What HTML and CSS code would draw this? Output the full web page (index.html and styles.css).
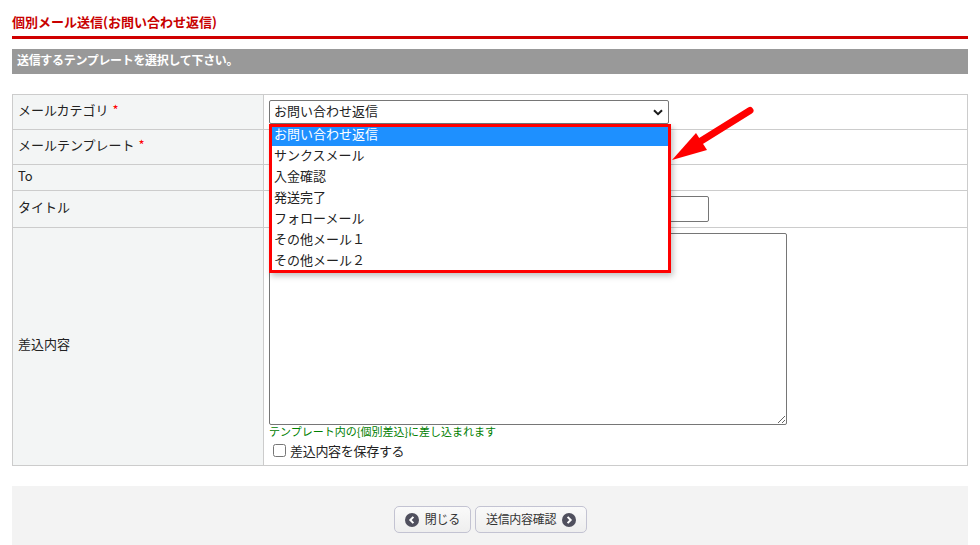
FILE: index.html
```html
<!DOCTYPE html>
<html lang="ja">
<head>
<meta charset="utf-8">
<title>個別メール送信</title>
<link rel="stylesheet" href="styles.css">
</head>
<body>
<h1 class="page-title">個別メール送信(お問い合わせ返信)</h1>
<h2 class="section-bar">送信するテンプレートを選択して下さい。</h2>
<table class="form-table">
  <tr class="row-a">
    <th>メールカテゴリ <span class="req">*</span></th>
    <td>
      <div class="select-wrap">
        <div class="fake-select">
          <span>お問い合わせ返信</span>
          <svg class="chev" width="10" height="7" viewBox="0 0 10 7"><path d="M1 1.200 5 5.200 9 1.200" fill="none" stroke="#1a1a1a" stroke-width="2"/></svg>
        </div>
        <ul class="popup">
          <li class="active">お問い合わせ返信</li>
          <li>サンクスメール</li>
          <li>入金確認</li>
          <li>発送完了</li>
          <li>フォローメール</li>
          <li>その他メール１</li>
          <li>その他メール２</li>
        </ul>
      </div>
    </td>
  </tr>
  <tr class="row-a">
    <th>メールテンプレート <span class="req">*</span></th>
    <td></td>
  </tr>
  <tr class="row-b">
    <th>To</th>
    <td></td>
  </tr>
  <tr class="row-c">
    <th>タイトル</th>
    <td><input class="title-input" type="text"></td>
  </tr>
  <tr class="row-d">
    <th class="mid">差込内容</th>
    <td class="body-cell">
      <textarea class="body-input"></textarea>
      <p class="hint">テンプレート内の{個別差込}に差し込まれます</p>
      <label class="save"><input type="checkbox"><span>差込内容を保存する</span></label>
    </td>
  </tr>
</table>
<div class="footer">
  <button class="btn" type="button">
    <svg width="14" height="14" viewBox="0 0 14 14"><circle cx="7" cy="7" r="7" fill="#50505e"/><path d="M8.400 3.900 5.300 7l3.100 3.100" fill="none" stroke="#fff" stroke-width="2"/></svg>
    <span>閉じる</span>
  </button>
  <button class="btn" type="button">
    <span>送信内容確認</span>
    <svg width="14" height="14" viewBox="0 0 14 14"><circle cx="7" cy="7" r="7" fill="#50505e"/><path d="M5.600 3.900 8.700 7l-3.100 3.100" fill="none" stroke="#fff" stroke-width="2"/></svg>
  </button>
</div>
<svg class="arrow" width="90" height="60" viewBox="0 0 90 60">
  <path d="M1 54 25 27 36 44Z" fill="#f00"/>
  <path d="M30 35 79 4.500" stroke="#f00" stroke-width="7" stroke-linecap="round" fill="none"/>
</svg>
</body>
</html>
```
FILE: styles.css
```css
* { box-sizing: border-box; }
html, body { margin: 0; padding: 0; }
body {
  position: relative;
  width: 980px;
  height: 545px;
  overflow: hidden;
  padding: 0 12px;
  background: #fff;
  color: #222;
  font-family: "Noto Sans CJK JP", "Liberation Sans", sans-serif;
  font-size: 13px;
}
.page-title {
  margin: 0;
  height: 39px;
  padding-top: 12px;
  border-bottom: 3px solid #d00000;
  color: #c80000;
  font-size: 13px;
  line-height: 20px;
  font-weight: 700;
}
.section-bar {
  margin: 10px 0 20px;
  height: 25px;
  padding-left: 5px;
  background: #999;
  color: #fff;
  font-size: 12px;
  line-height: 22px;
  font-weight: 700;
  letter-spacing: -0.32px;
}
.form-table {
  width: 956px;
  border-collapse: collapse;
  table-layout: fixed;
}
.form-table th, .form-table td {
  border: 1px solid #ccc;
  padding: 0;
  vertical-align: top;
}
.form-table th {
  width: 251px;
  padding-left: 5px;
  background: #f3f5f5;
  font-weight: 400;
  text-align: left;
  line-height: 20px;
}
.form-table td { padding-left: 5px; }
.form-table th.mid { vertical-align: middle; padding-bottom: 6px; }
.row-a { height: 35px; }
.row-a th { padding-top: 5px; }
.row-b { height: 26px; }
.row-b th { padding-top: 1px; }
.row-c { height: 37px; }
.row-c th { padding-top: 6px; }
.row-d { height: 238px; }
.req { margin-left: 1px; color: #f00; }
.select-wrap { position: relative; height: 24px; margin-top: 5px; }
.fake-select {
  display: flex;
  justify-content: space-between;
  align-items: center;
  width: 400px;
  height: 24px;
  padding: 0 5px 3px 4px;
  border: 1px solid #767676;
  border-radius: 2px;
  background: #fff;
}
.chev { margin-top: 3px; }
.popup {
  position: absolute;
  z-index: 2;
  top: 24px;
  left: 0;
  width: 402px;
  height: 149px;
  margin: 0;
  padding: 0;
  list-style: none;
  border: 3px solid #f00;
  background: #fff;
  box-shadow: 2px 3px 6px rgba(0,0,0,.25);
}
.popup li {
  height: 21px;
  padding-left: 2px;
  line-height: 16px;
}
.popup li.active {
  height: 19px;
  margin-bottom: 1px;
  padding-left: 2px;
  line-height: 14px;
  background: #1e90ff;
  color: #fff;
}
.title-input {
  display: block;
  width: 440px;
  height: 26px;
  margin-top: 5px;
  border: 1px solid #767676;
  border-radius: 2px;
  background: #fff;
}
.body-cell { padding-top: 5px; }
.body-input {
  display: block;
  width: 518px;
  height: 192px;
  margin: 5px 0 0;
  border: 1px solid #767676;
  border-radius: 2px;
  background: #fff;
}
.hint {
  margin: 0;
  height: 13px;
  color: #008000;
  font-size: 11px;
  line-height: 12px;
}
.save {
  display: flex;
  align-items: center;
  gap: 4px;
  margin: 6px 0 0 4px;
  line-height: 12px;
  letter-spacing: -0.3px;
}
.save input { width: 13px; height: 13px; margin: 0; }
.footer {
  display: flex;
  justify-content: center;
  gap: 4px;
  height: 59px;
  margin-top: 20px;
  padding-top: 20px;
  padding-left: 1px;
  background: #f3f3f3;
}
.btn {
  display: flex;
  align-items: center;
  gap: 6px;
  height: 27px;
  padding: 0 10px 2px;
  border: 1px solid #c3c3d2;
  border-radius: 5px;
  background: linear-gradient(#fafafa, #eeeeee);
  color: #333;
  font-family: inherit;
  font-size: 12px;
  letter-spacing: -0.3px;
}
.btn svg { margin-top: 2px; }
.arrow {
  position: absolute;
  z-index: 3;
  left: 671px;
  top: 106px;
}
```
